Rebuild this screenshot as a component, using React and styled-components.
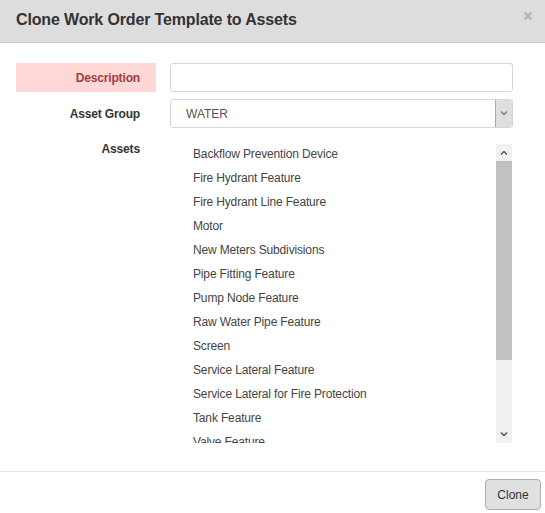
import styled, { createGlobalStyle } from "styled-components";

const GlobalStyle = createGlobalStyle`
  body {
    margin: 0;
    font-family: "Liberation Sans", Arial, sans-serif;
    background: #fff;
  }
`;

const Modal = styled.div`
  width: 545px;
  height: 513px;
  display: flex;
  flex-direction: column;
  background: #fff;
`;

const Header = styled.div`
  height: 42px;
  flex-shrink: 0;
  background: #dddddd;
  border-bottom: 1px solid #cfcfcf;
  display: flex;
  align-items: center;
  justify-content: space-between;
  padding: 0 12px 0 16px;
`;

const Title = styled.h4`
  margin: -3px 0 0;
  font-size: 16px;
  font-weight: bold;
  letter-spacing: -0.15px;
  color: #333;
`;

const Close = styled.button`
  border: 0;
  background: none;
  padding: 0;
  width: 10px;
  height: 10px;
  margin-top: -10px;
  display: flex;
  cursor: pointer;
`;

const Body = styled.div`
  flex: 1;
  padding-top: 20px;
  display: flex;
  flex-direction: column;
  gap: 7px;
`;

const Row = styled.div`
  display: grid;
  grid-template-columns: 140px 343px;
  column-gap: 14px;
  padding-left: 16px;
  align-items: ${(p) => (p.$top ? "start" : "stretch")};
  margin-top: ${(p) => (p.$top ? "9px" : "0")};
`;

const Label = styled.label`
  display: flex;
  align-items: center;
  justify-content: flex-end;
  padding-right: 16px;
  font-size: 12px;
  font-weight: bold;
  letter-spacing: -0.15px;
  color: ${(p) => (p.$error ? "#a43c3c" : "#333")};
  background: ${(p) => (p.$error ? "#ffd7d7" : "transparent")};
  height: ${(p) => (p.$top ? "14px" : "29px")};
  margin-top: ${(p) => (p.$top ? "-2px" : "0")};
`;

const TextInput = styled.input`
  box-sizing: border-box;
  height: 29px;
  border: 1px solid #d6d6d6;
  border-radius: 3px;
  padding: 0 15px;
  font-family: inherit;
  font-size: 12px;
  outline: none;
`;

const Select = styled.div`
  box-sizing: border-box;
  height: 29px;
  border: 1px solid #d6d6d6;
  border-radius: 3px;
  display: flex;
  align-items: stretch;
  overflow: hidden;
`;

const SelectValue = styled.div`
  flex: 1;
  display: flex;
  align-items: center;
  padding-left: 15px;
  font-size: 12px;
  color: #555;
`;

const SelectButton = styled.div`
  width: 16px;
  background: #dedede;
  border-left: 1px solid #a9a9a9;
  display: flex;
  align-items: center;
  justify-content: center;
`;

const ListBox = styled.div`
  height: 299px;
  display: flex;
`;

const Items = styled.ul`
  flex: 1;
  list-style: none;
  margin: 0;
  padding: 0 0 0 23px;
  overflow: hidden;
`;

const Item = styled.li`
  height: 24px;
  line-height: 20px;
  font-size: 12px;
  letter-spacing: -0.15px;
  color: #444;
  white-space: nowrap;
`;

const Scrollbar = styled.div`
  width: 16px;
  margin-right: 1px;
  background: #f1f1f1;
  display: flex;
  flex-direction: column;
`;

const ScrollArrow = styled.div`
  height: 17px;
  flex-shrink: 0;
  display: flex;
  align-items: center;
  justify-content: center;
`;

const Thumb = styled.div`
  height: 199px;
  flex-shrink: 0;
  background: #c1c1c1;
`;

const Track = styled.div`
  flex: 1;
`;

const Footer = styled.div`
  height: 34px;
  flex-shrink: 0;
  border-top: 1px solid #e5e5e5;
  display: flex;
  justify-content: flex-end;
  align-items: flex-start;
  padding: 7px 4px 0 0;
`;

const Button = styled.button`
  width: 56px;
  height: 31px;
  border: 1px solid #adadad;
  border-radius: 4px;
  background: #e0e0e0;
  color: #333;
  font-family: inherit;
  font-size: 12px;
  cursor: pointer;
`;

const Chevron = ({ up, color = "#505050" }) => (
  <svg width="8" height="5" viewBox="0 0 8 5">
    <path
      d={up ? "M1 4.5 L4 1.5 L7 4.5" : "M1 0.5 L4 3.5 L7 0.5"}
      fill="none"
      stroke={color}
      strokeWidth="1.4"
    />
  </svg>
);

const assets = [
  "Backflow Prevention Device",
  "Fire Hydrant Feature",
  "Fire Hydrant Line Feature",
  "Motor",
  "New Meters Subdivisions",
  "Pipe Fitting Feature",
  "Pump Node Feature",
  "Raw Water Pipe Feature",
  "Screen",
  "Service Lateral Feature",
  "Service Lateral for Fire Protection",
  "Tank Feature",
  "Valve Feature",
  "Well Feature",
];

export default function App() {
  return (
    <Modal>
      <GlobalStyle />
      <Header>
        <Title>Clone Work Order Template to Assets</Title>
        <Close aria-label="Close">
          <svg width="10" height="10" viewBox="0 0 10 10">
            <path d="M1.5 1.5 L8.5 8.5 M8.5 1.5 L1.5 8.5" stroke="#b5b5b5" strokeWidth="2.4" />
          </svg>
        </Close>
      </Header>
      <Body>
        <Row>
          <Label $error>Description</Label>
          <TextInput />
        </Row>
        <Row>
          <Label>Asset Group</Label>
          <Select>
            <SelectValue>WATER</SelectValue>
            <SelectButton>
              <Chevron color="#777" />
            </SelectButton>
          </Select>
        </Row>
        <Row $top>
          <Label $top>Assets</Label>
          <ListBox>
            <Items>
              {assets.map((a) => (
                <Item key={a}>{a}</Item>
              ))}
            </Items>
            <Scrollbar>
              <ScrollArrow>
                <Chevron up />
              </ScrollArrow>
              <Thumb />
              <Track />
              <ScrollArrow>
                <Chevron />
              </ScrollArrow>
            </Scrollbar>
          </ListBox>
        </Row>
      </Body>
      <Footer>
        <Button>Clone</Button>
      </Footer>
    </Modal>
  );
}
